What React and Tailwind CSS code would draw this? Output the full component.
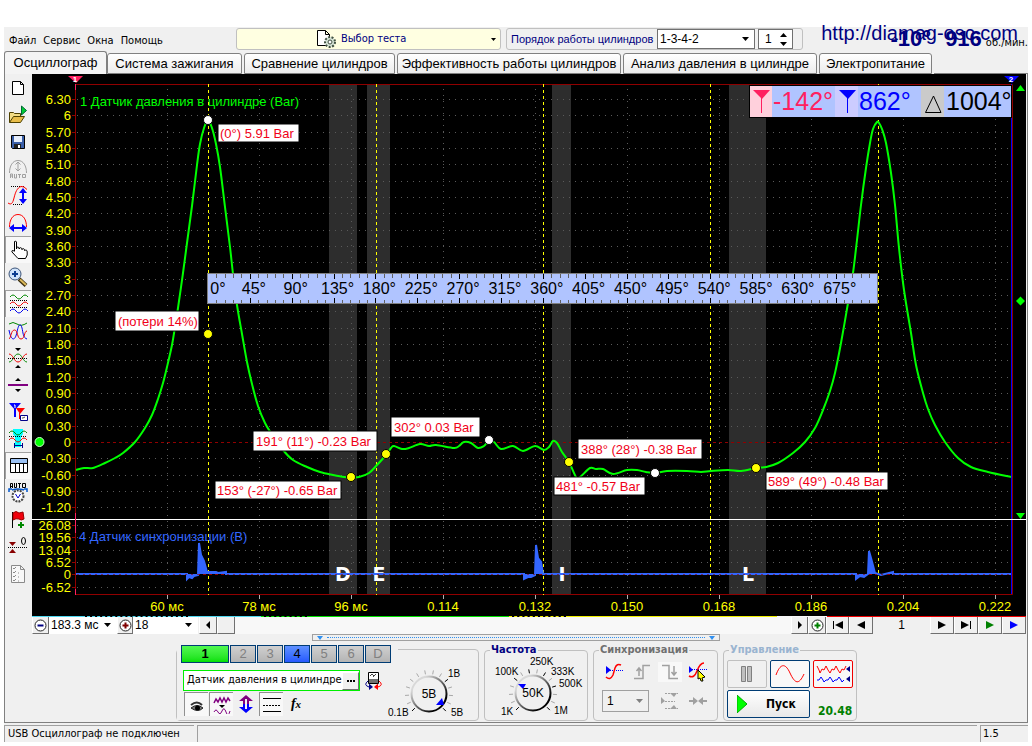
import React from "react";

const UI = "font-['DejaVu_Sans_Condensed','DejaVu_Sans',sans-serif]";
const ARIAL = "font-['Liberation_Sans',Arial,sans-serif]";

const range = (n) => Array.from({ length: n }, (_, i) => i);

/* ---------- toolbar icons, all drawn on a 20x20 grid ---------- */

const wave = (y, a = 2) =>
  `M1 ${y} q3 ${-a * 2} 6 0 t6 0 t6 0`;

const tools = [
  {
    name: "Новый",
    icon: <path d="M4.500 3.500h8l3 3v10h-11zM12.500 3.500v3h3" fill="#fff" stroke="#000" />,
  },
  {
    name: "Открыть",
    icon: (
      <>
        <path d="M1.500 17.500v-10h4l1 1h6v3" fill="#f3dc85" stroke="#4d4000" />
        <path d="M1.500 17.500l4-6h11l-4 6z" fill="#e8bd4a" stroke="#4d4000" />
        <path d="M13.500 1v9l5-4.500z" fill="#0c3" stroke="#063" />
      </>
    ),
  },
  {
    name: "Сохранить",
    icon: (
      <>
        <path d="M3.500 3.500h13v13h-12l-1-1z" fill="#3a5fa8" stroke="#000" />
        <path d="M6 4h8v6H6z" fill="#e6eefc" />
        <path d="M6 12h7v4H6z" fill="#222" />
        <path d="M10 13h2v3h-2z" fill="#fff" />
      </>
    ),
  },
  {
    name: "Авто",
    icon: (
      <g fill="none" stroke="#a0a0a0">
        <path d="M1.500 14c0-7 3-12.500 8.500-12.500S18.500 7 18.500 14" />
        <path d="M10 3v9M7.500 5.500L10 3l2.500 2.500M7.500 9.500L10 12l2.500-2.500" />
        <path d="M2.500 19v-4h2v4M2.500 17h2M6.500 15v4h2v-4M10 15.500h3M11.500 15v4M14.500 15.500h3v3h-3z" />
      </g>
    ),
  },
  {
    name: "Амплитуда",
    icon: (
      <>
        <path d="M3 .5h14M5 18.500h10" stroke="#000" strokeDasharray="1 1" />
        <path d="M0 17c3 2 4.500 1 6-5s3-10 7-11.500q3-.5 6 3" fill="none" stroke="#f00" />
        <path d="M15 4v12" stroke="#00f" strokeWidth="2" />
        <path d="M11 7l4-5 4 5zM11 13l4 5 4-5z" fill="#00f" />
      </>
    ),
  },
  {
    name: "Развертка",
    icon: (
      <>
        <path d="M1.500 14c0-7 3-12.500 8.500-12.500S18.500 7 18.500 14" fill="none" stroke="#f00" />
        <path d="M4 15h12" stroke="#00f" strokeWidth="2" />
        <path d="M6 11l-5 4 5 4zM14 11l5 4-5 4z" fill="#00f" />
      </>
    ),
  },
  {
    name: "Рука",
    pressed: true,
    icon: (
      <path
        d="M5.500 1.500q1.500-1 2 .5v7q0-2 1.300-2t1.400 2q.2-1.500 1.500-1.300t1.300 2q.3-1.300 1.500-1t1.200 2q.4-1 1.500-.6t1 1.900v3l-1.700 3.500H9l-6-6.500q-.8-2.500 2.500-.8z"
        fill="#fff"
        stroke="#000"
      />
    ),
  },
  {
    name: "Лупа",
    icon: (
      <>
        <path d="M11 12l7 6.500" stroke="#3b2f10" strokeWidth="4" />
        <path d="M12 12.500l6 5.500" stroke="#dcb95a" strokeWidth="2" />
        <circle cx="7" cy="7" r="6" fill="#cfe3fb" stroke="#3c5478" />
        <path d="M4 7h6M7 4v6" stroke="#0b3d91" strokeWidth="2" />
      </>
    ),
  },
  {
    name: "Раздельные каналы",
    pressed: true,
    icon: (
      <g fill="none">
        <path d={wave(3)} stroke="#080" />
        <path d="M1 6.500h18M1 13.500h18" stroke="#000" strokeDasharray="1 1" />
        <path d={wave(10)} stroke="#e00" />
        <path d={wave(17)} stroke="#00e" />
      </g>
    ),
  },
  {
    name: "Совмещенные каналы",
    icon: (
      <g fill="none">
        <path d="M1 3q4-3 8 0t10-1" stroke="#080" />
        <path d="M1 9C3 20 7 21 9 11s4-8 5-4 1 10 5 11" stroke="#00e" />
        <path d="M1 18C3 17 3 9 6.500 9S9 18 13 18s3-8 6-8" stroke="#e00" />
      </g>
    ),
  },
  {
    name: "Сжать каналы",
    icon: (
      <>
        <path d="M1 14C5 14 6 6 10 6s5 8 9 8" fill="none" stroke="#080" />
        <path d="M1 6C5 6 6 14 10 14s5-8 9-8" fill="none" stroke="#e00" />
        <path d="M0 10.500h20" stroke="#000" strokeDasharray="1 1" />
        <path d="M7 0h6l-3 3zM7 20h6l-3-3z" />
      </>
    ),
  },
  {
    name: "Линия",
    icon: (
      <>
        <path d="M0 10h20" stroke="#800080" strokeWidth="2" />
        <path d="M7 6h6l-3-3zM7 14h6l-3 3z" />
      </>
    ),
  },
  {
    name: "Маркеры",
    icon: (
      <>
        <path d="M1 1h12L7 8z" fill="#00f" />
        <path d="M7 7v8" stroke="#00f" strokeWidth="2" />
        <path d="M8 6h9l-5 6z" fill="#f00" />
        <path d="M11.500 11v6" stroke="#f00" />
        <path d="M12.500 13.500h7v5h-7z" fill="#fff" stroke="#008" />
        <path d="M6 3h1v3" fill="none" stroke="#fff" />
        <path d="M14 16h1l2-1" fill="none" stroke="#555" />
      </>
    ),
  },
  {
    name: "Область",
    icon: (
      <>
        <path d="M5 0h10v5l-2 3v10H7V8L5 5z" fill="#0ff" />
        <path d={wave(4)} fill="none" stroke="#080" />
        <path d={wave(11)} fill="none" stroke="#e00" />
        <path d="M1 7.500h18" stroke="#000" strokeDasharray="1 1" />
        <path d="M6.500 14v5M14.500 14v5M7 16.500h7" stroke="#008" />
      </>
    ),
  },
  {
    name: "Таблица",
    pressed: true,
    icon: (
      <>
        <path d="M1.500 2.500h17v14h-17z" fill="#fff" stroke="#000" />
        <path d="M2 3h16v4H2z" fill="#9bc2f5" />
        <path d="M1 7.500h18M6.500 7v10M10.500 7v10M14.500 7v10" stroke="#000" />
      </>
    ),
  },
  {
    name: "Авто вольтметр",
    icon: (
      <>
        <path d="M2.500 5V.5h2V5M2.500 3.500h2M6.500 0v4.500h2V0M10 .5h3M11.500 0v5M14.500 .5h3v4h-3z" fill="none" stroke="#000" />
        <path d="M1 9V6h3M19 9V6h-3M4 7q6-2 12 0" fill="none" stroke="#05c" strokeWidth="1.500" />
        <circle cx="10" cy="13" r="5.500" fill="#fff" stroke="#444" strokeWidth="2" strokeDasharray="2 1" />
        <path d="M7.500 11l2.500 4 2.500-4" fill="none" stroke="#00c" />
      </>
    ),
  },
  {
    name: "Флаг",
    icon: (
      <>
        <path d="M4.500 2v16" stroke="#000" />
        <path d="M5 3q3-3 6 0l4-1 1 7q-3 2-5 0-3-1-6 1z" fill="#f0000c" stroke="#900" />
        <path d="M10 15h6M13 12v6" stroke="#080" strokeWidth="2" />
      </>
    ),
  },
  {
    name: "Ноль",
    icon: (
      <>
        <path d="M1 5h7l-3.500 4zM1 16h7l-3.500-4z" fill="#800" />
        <path d="M0 10.500h20" stroke="#000" strokeDasharray="1 1" />
        <ellipse cx="15.500" cy="4" rx="2" ry="3.500" fill="none" stroke="#000" />
      </>
    ),
  },
  {
    name: "Список",
    icon: (
      <g fill="none" stroke="#8a8a8a">
        <path d="M3.500 1.500h9l4 4v13h-13zM12.500 1.500v4h4" fill="#f8f8f8" />
        <path d="M5 4l1 1 2-2M5 8l1 1 2-2M5 12l1 1 2-2M5 16l1 1 2-2M10 9h1M10 13h1M10 17h1" />
      </g>
    ),
  },
];

function Toolbar() {
  return (
    <div className="flex w-7 shrink-0 flex-col border-l border-[#808080]">
      {tools.map((t) => (
        <button
          key={t.name}
          title={t.name}
          aria-label={t.name}
          className={`flex h-[27px] w-[26px] items-center justify-center ${
            t.pressed ? "border-l border-t border-[#a0a0a0] bg-[#f8f8f8]" : ""
          }`}
        >
          <svg viewBox="0 0 20 20" className="h-5 w-5">
            {t.icon}
          </svg>
        </button>
      ))}
    </div>
  );
}

/* ---------- chart ---------- */

const pressure = [
  [76, 470], [84, 468], [93, 468], [105, 463], [115, 458], [123, 453], [135, 442], [145, 428],
  [152, 415], [158, 399], [163, 383], [167, 367], [172, 345], [175, 327], [178, 308], [183, 273],
  [187, 243], [192, 206], [197, 165], [200, 144], [204, 128], [208, 120], [212, 128], [216, 144],
  [220, 167], [225, 207], [230, 247], [233, 274], [237, 305], [242, 334], [247, 362], [252, 384],
  [258, 406], [265, 423], [271, 433], [283, 450], [293, 460], [307, 467], [320, 472], [333, 475],
  [344, 477], [351, 477], [359, 477], [369, 473], [377, 465], [386, 455], [391, 448], [394, 446],
  [402, 449], [409, 448], [420, 444], [429, 446], [436, 445], [454, 448], [459, 446], [464, 442],
  [471, 443], [478, 448], [484, 446], [489, 441], [494, 442], [501, 449], [513, 446], [523, 451],
  [535, 446], [544, 450], [549, 447], [553, 441], [557, 443], [562, 452], [569, 462], [576, 477],
  [580, 477], [590, 468], [596, 469], [603, 469], [613, 474], [627, 470], [637, 470], [646, 472],
  [655, 473], [667, 471], [687, 471], [701, 472], [711, 471], [728, 470], [741, 471], [756, 468],
  [766, 467], [778, 463], [793, 453], [805, 442], [815, 428], [823, 410], [830, 391], [835, 373],
  [841, 343], [848, 303], [853, 273], [857, 240], [861, 205], [866, 168], [870, 143], [873, 129],
  [877, 122], [879, 123], [882, 129], [886, 143], [891, 173], [895, 205], [899, 248], [904, 290],
  [911, 333], [916, 365], [923, 393], [928, 409], [935, 425], [945, 442], [958, 458], [971, 467],
  [988, 472], [1011, 477],
];

// Catmull-Rom through the samples
const smooth = (pts) =>
  pts.slice(1).reduce((d, [x, y], i) => {
    const p0 = pts[i - 1] || pts[i];
    const p1 = pts[i];
    const p3 = pts[i + 2] || [x, y];
    return (
      d +
      `C${p1[0] + (x - p0[0]) / 6} ${p1[1] + (y - p0[1]) / 6} ${x - (p3[0] - p1[0]) / 6} ${y - (p3[1] - p1[1]) / 6} ${x} ${y}`
    );
  }, `M${pts[0]}`);

const sync =
  "M76 574H187V579L189 577L192 578L194 576L198 575L199 543L201 555L204 561L207 572H216L218 573L226 572V574H524V579L528 577L531 577L535 575L536 545L538 558L541 562L543 574H856V579L860 576L864 577L868 574L869 551L871 558L875 573L881 575L893 572V574H1011";

const bands = [[329, 28], [367, 23], [552, 19], [729, 37]];
const timeTicks = ["60 мс", "78 мс", "96 мс", "0.114", "0.132", "0.150", "0.168", "0.186", "0.204", "0.222"];
const syncTicks = [["26.08", 525], ["19.56", 537], ["13.04", 550], ["6.52", 562], ["0", 574], ["-6.52", 587]];

const barLabel = (i) => {
  const v = (63 - 3 * i) / 10;
  return Number.isInteger(v) ? String(v) : v.toFixed(2);
};
const barY = (i) => Math.round(99 + 16.33 * i);

const dots = [
  [208, 120, "#fff"], [208, 334, "#ff0"], [351, 477, "#ff0"], [386, 454, "#ff0"], [489, 440, "#fff"],
  [569, 462, "#ff0"], [655, 473, "#fff"], [756, 468, "#ff0"],
];

const notes = [
  { x: 218, y: 124, w: 81, h: 18, text: "(0°) 5.91 Bar" },
  { x: 115, y: 311, w: 84, h: 20, text: "(потери 14%)" },
  { x: 391, y: 417, w: 89, h: 20, text: "302° 0.03 Bar" },
  { x: 253, y: 431, w: 124, h: 20, text: "191° (11°) -0.23 Bar" },
  { x: 578, y: 439, w: 124, h: 20, text: "388° (28°) -0.38 Bar" },
  { x: 554, y: 477, w: 91, h: 18, text: "481° -0.57 Bar" },
  { x: 215, y: 481, w: 126, h: 18, text: "153° (-27°) -0.65 Bar" },
  { x: 766, y: 472, w: 122, h: 18, text: "589° (49°) -0.48 Bar" },
];

function Ruler() {
  return (
    <g>
      <rect x="207.500" y="273.500" width="670" height="30" fill="#b0c4ff" stroke="#808080" />
      {range(79).map((i) => {
        const x = Math.round(208 + (i + 1) * 8.37) + 0.5;
        const major = (i + 1) % 5 === 0;
        return (
          <path
            key={i}
            d={major ? `M${x} 274v5M${x} 303v-5` : `M${x} 274v4M${x} 303v-3`}
            stroke={major ? "#000" : "#606060"}
          />
        );
      })}
      <g fontSize="16" fill="#000">
        {range(16).map((i) => (
          <text key={i} x={i ? 212 + i * 41.85 : 218} y="294" textAnchor="middle">
            {i * 45}°
          </text>
        ))}
      </g>
    </g>
  );
}

function CursorReadout() {
  return (
    <g fontSize="25">
      <rect x="749" y="85" width="263" height="33" fill="#000" />
      <rect x="750" y="86" width="261" height="31" fill="#b0c4ff" />
      <rect x="750" y="86" width="22" height="31" fill="#ffd0dc" />
      <rect x="835" y="86" width="23" height="31" fill="#ccccff" />
      <rect x="921" y="86" width="23" height="31" fill="#cacaca" />
      <path d="M753 90h17l-8 9z" fill="#ff2060" />
      <path d="M761.500 98v15" stroke="#ff2060" />
      <path d="M839 90h17l-8 9z" fill="#00f" />
      <path d="M847.500 98v15" stroke="#00f" />
      <path d="M933.500 96l-8 16.500h15.500z" fill="none" stroke="#000" />
      <text x="773" y="110" fill="#ff2060">-142°</text>
      <text x="859" y="110" fill="#00f">862°</text>
      <text x="946" y="110" fill="#000">1004°</text>
    </g>
  );
}

function Chart() {
  return (
    <svg viewBox="32 74 994 542" className={`block h-auto w-full ${ARIAL}`} fontSize="13">
      <rect x="32" y="74" width="994" height="542" fill="#000" />
      {bands.map(([x, w]) => (
        <rect key={x} x={x} y="85" width={w} height="509" fill="#2d2d2d" />
      ))}

      <g stroke="#5a5a5a" strokeDasharray="1 5">
        {range(26).filter((i) => i !== 21).map((i) => (
          <path key={i} d={`M77 ${barY(i) + 0.5}H1011`} />
        ))}
        {syncTicks.filter(([v]) => v !== "0").map(([v, y]) => (
          <path key={v} d={`M77 ${y + 0.5}H1011`} />
        ))}
        {timeTicks.map((t, i) => (
          <path key={t} d={`M${167.5 + i * 92} 89V592`} />
        ))}
      </g>
      <path d="M77 442.500H1011M77 574.500H1011" stroke="#900000" strokeDasharray="3 3" />

      {/* frame */}
      <path d="M75.500 84.500H1012.500V594.500H75.500z" fill="none" stroke="#900000" />
      <path d="M1011.500 84V594" stroke="#00f" />
      <path d="M32 519.500H1026" stroke="#fff" />
      <path d="M75.500 84v6M75.500 513v20M75.500 589v6" stroke="#ff2060" />
      <path
        d={range(26).map((i) => `M72 ${barY(i) + 0.5}h3`).join("") + syncTicks.map(([, y]) => `M72 ${y + 0.5}h3`).join("")}
        stroke="#900000"
      />
      <path d={timeTicks.map((_, i) => `M${167.5 + i * 92} 595v4`).join("")} stroke="#b0b0b0" />

      <g fill="#ff0" textAnchor="end">
        {range(26).map((i) => (
          <text key={i} x="71" y={barY(i) + 5}>{barLabel(i)}</text>
        ))}
        {syncTicks.map(([v, y]) => (
          <text key={v} x="71" y={y + 5}>{v}</text>
        ))}
      </g>
      <g fill="#ff0" textAnchor="middle">
        {timeTicks.map((t, i) => (
          <text key={t} x={167 + i * 92} y="611">{t}</text>
        ))}
      </g>

      <text x="80" y="106" fill="#0f0">1 Датчик давления в цилиндре (Bar)</text>
      <text x="79" y="541" fill="#36f">4 Датчик синхронизации (В)</text>

      <path
        d="M208.500 84V595M376.500 84V595M543.500 84V595M710.500 84V595M878.500 84V595"
        stroke="#ff0"
        strokeDasharray="3 3"
      />
      <path d={smooth(pressure)} fill="none" stroke="#0f0" strokeWidth="2" />
      <g fontSize="19" fontWeight="bold" fill="#fff" textAnchor="middle" className="font-['DejaVu_Sans',sans-serif]">
        <text x="343" y="581">D</text>
        <text x="379" y="581">E</text>
        <text x="562" y="581">I</text>
        <text x="748" y="581">L</text>
      </g>
      <path d={sync} fill="#36f" stroke="#36f" strokeWidth="2" />
      <path d="M77 574.500H1011" stroke="#900000" strokeDasharray="2 4" opacity="0.600" />

      <Ruler />
      {notes.map((n) => (
        <g key={n.text}>
          <rect x={n.x} y={n.y} width={n.w} height={n.h} fill="#fff" stroke="#000" />
          <text x={n.x + (n.h > 18 ? 3 : 2)} y={n.y + n.h / 2 + 5} fill="#f00018">
            {n.text}
          </text>
        </g>
      ))}
      {dots.map(([x, y, c]) => (
        <circle key={`${x}-${y}`} cx={x} cy={y} r="4.500" fill={c} stroke="#000" />
      ))}
      <CursorReadout />

      {/* edge markers */}
      <path d="M68 76h15l-7 7z" fill="#ff2060" />
      <path d="M1004 76h15l-7 7z" fill="#00f" />
      <g fill="#fff" fontSize="8" fontWeight="bold" textAnchor="middle">
        <text x="75" y="82">1</text>
        <text x="1011" y="82">2</text>
      </g>
      <circle cx="39.500" cy="442" r="4.500" fill="#0f0" stroke="#cfc" />
      <path d="M1016 91h9l-4.500-6zM1016 301l4.500-4.500 4.500 4.500-4.500 4.500zM1016 513h9l-4.500 6z" fill="#0f0" />
    </svg>
  );
}

/* ---------- header ---------- */

function Header() {
  return (
    <header className={`relative flex h-6 items-start pt-px text-[11px] ${UI}`}>
      <nav className="flex w-[232px] shrink-0 gap-[7px] pl-[5px] pt-[5px]">
        <button>Файл</button>
        <button>Сервис</button>
        <button>Окна</button>
        <button>Помощь</button>
      </nav>
      <button className="flex h-[22px] w-[265px] shrink-0 items-center rounded-[3px] border border-[#c0c0c0] bg-[#ffffe1] pl-[79px] pr-1 text-[#000080]">
        <svg viewBox="0 0 21 20" className="mr-1 h-5 w-[21px]">
          <path d="M1.500 1.500h8l4 4v11h-12zM9.500 1.500v4h4" fill="#fff" stroke="#000" />
          <circle cx="14" cy="13" r="5" fill="#d5e3d5" stroke="#405040" strokeWidth="2" strokeDasharray="2 1.500" />
          <circle cx="14" cy="13" r="2" fill="#fff" stroke="#405040" />
        </svg>
        Выбор теста
        <svg viewBox="0 0 5 3" className="ml-auto h-[3px] w-[5px]">
          <path d="M0 0h5L2.500 3z" />
        </svg>
      </button>
      <div className="ml-[5px] flex h-[22px] w-[297px] shrink-0 items-center rounded-[3px] border border-[#c0c0c0] pl-1">
        <label htmlFor="order" className={`w-[146px] whitespace-nowrap text-[#000080] ${ARIAL}`}>
          Порядок работы цилиндров
        </label>
        <div className="relative">
          <select
            id="order"
            className={`h-5 w-[98px] appearance-none border border-[#707070] bg-white pl-[2px] text-xs ${ARIAL}`}
          >
            <option>1-3-4-2</option>
          </select>
          <svg viewBox="0 0 7 4" className="pointer-events-none absolute right-1.5 top-2 h-1 w-[7px]">
            <path d="M0 0h7L3.500 4z" />
          </svg>
        </div>
        <div className="relative ml-[3px]">
          <input
            aria-label="Цилиндр"
            defaultValue="1"
            className={`h-5 w-[35px] border border-[#707070] bg-white pl-1.5 text-xs ${ARIAL}`}
          />
          <svg viewBox="0 0 7 13" className="pointer-events-none absolute right-1.5 top-1 h-[13px] w-[7px]">
            <path d="M0 4h7L3.500 0zM0 9h7l-3.500 4z" />
          </svg>
        </div>
      </div>
      <div className="ml-auto flex items-baseline text-[#000080]">
        <span className={`mr-3.5 text-[22px] font-bold leading-[22px] ${ARIAL}`}>-10°</span>
        <span className={`mr-1 text-[22px] font-bold leading-[22px] ${ARIAL}`}>916</span>
        <span className="text-[11px] text-black">об./мин.</span>
      </div>
      <a
        href="#site"
        className={`absolute -top-1.5 right-2.5 whitespace-nowrap text-xl leading-6 text-[#000080] ${ARIAL}`}
      >
        http://diamag-osc.com
      </a>
    </header>
  );
}

const tabs = [
  ["Система зажигания", "w-[135px]"],
  ["Сравнение цилиндров", "w-[151px]"],
  ["Эффективность работы цилиндров", "w-[224px]"],
  ["Анализ давления в цилиндре", "w-[194px]"],
  ["Электропитание", "w-[113px]"],
];

function Tabs() {
  return (
    <div role="tablist" className={`flex h-[23px] items-end text-[13px] leading-5 ${ARIAL}`}>
      <button
        role="tab"
        aria-selected="true"
        className="h-[23px] w-[103px] shrink-0 rounded-t-[3px] border border-b-0 border-[#808080] bg-[#f4f4f4]"
      >
        Осциллограф
      </button>
      {tabs.map(([t, w]) => (
        <button
          key={t}
          role="tab"
          className={`mr-0.5 flex h-[21px] shrink-0 justify-center whitespace-nowrap rounded-t-[3px] border border-[#808080] bg-linear-to-b from-white to-[#ececec] ${w}`}
        >
          {t}
        </button>
      ))}
      <div className="flex-1 self-end border-b border-[#808080]" />
    </div>
  );
}

/* ---------- navigation row ---------- */

const flat = "flex h-[18px] shrink-0 items-center justify-center border border-t-white border-l-white border-r-[#707070] border-b-[#707070] bg-[#f0f0f0]";

function Glyph({ d, color = "#000" }) {
  return (
    <svg viewBox="0 0 12 8" className="h-2 w-3">
      <path d={d} fill={color} />
    </svg>
  );
}

function CircleSign({ color, plus }) {
  return (
    <svg viewBox="0 0 13 13" className="h-[13px] w-[13px]">
      <circle cx="6.500" cy="6.500" r="5.500" fill="#fff" stroke="#222" />
      <path d={plus ? "M3.500 6.500h6M6.500 3.500v6" : "M3.500 6.500h6"} stroke={color} strokeWidth="2" />
    </svg>
  );
}

function NavSelect({ label, value, width }) {
  return (
    <div className="relative shrink-0">
      <select aria-label={label} className={`block h-[18px] appearance-none bg-white pl-[2px] text-xs ${width}`}>
        <option>{value}</option>
      </select>
      <svg viewBox="0 0 7 4" className="pointer-events-none absolute right-1.5 top-[7px] h-1 w-[7px]">
        <path d="M0 0h7L3.500 4z" />
      </svg>
    </div>
  );
}

function NavRow() {
  return (
    <div className={`relative flex h-[18px] ${ARIAL}`}>
      <button aria-label="Уменьшить" className={`${flat} w-[17px]`}><CircleSign color="#000080" /></button>
      <NavSelect label="Длительность" value="183.3 мс" width="w-[68px]" />
      <button aria-label="Увеличить" className={`${flat} w-4`}><CircleSign color="#800000" plus /></button>
      <NavSelect label="Цена деления" value="18" width="w-[65px]" />
      <button aria-label="Влево" className={`${flat} ml-px w-[18px]`}><Glyph d="M8 0v8L4 4z" /></button>
      <button aria-label="Положение" className={`${flat} w-[18px]`} />
      <div className="flex-1 bg-[#f8f8f8]" />
      <button aria-label="Вправо" className={`${flat} w-[17px]`}><Glyph d="M4 0v8l4-4z" /></button>
      <button aria-label="Добавить" className={`${flat} w-[18px]`}><CircleSign color="#008000" plus /></button>
      <button aria-label="В начало" className={`${flat} w-[23px]`}><Glyph d="M1 0h1v8H1zM11 0v8L3 4z" /></button>
      <button aria-label="Назад" className={`${flat} w-6`}><Glyph d="M10 0v8L2 4z" /></button>
      <span className="w-[57px] text-center text-xs leading-[18px]">1</span>
      <button aria-label="Вперед" className={`${flat} w-6`}><Glyph d="M2 0v8l8-4z" /></button>
      <button aria-label="В конец" className={`${flat} w-6`}><Glyph d="M1 0v8l8-4zM10 0h1v8h-1z" /></button>
      <button aria-label="Воспроизвести" className={`${flat} w-6`}><Glyph d="M2 0v8l8-4z" color="#008000" /></button>
      <button aria-label="Быстро" className={`${flat} w-6`}><Glyph d="M2 0v8l8-4z" color="#0000ff" /></button>

      {/* overview strip */}
      <div className="absolute inset-x-0 top-0 flex h-px bg-black">
        <div className="w-[5%] bg-[#4fd8f0]" />
        <div className="w-[11%] border-t border-dashed border-[#4fd8f0]" />
        <div className="w-[7%] bg-[#4fd8f0]" />
        <div className="w-[5%] border-t border-dashed border-[#00e000]" />
        <div className="w-[20%] bg-[#00e000]" />
        <div className="w-[6%] border-t border-dashed border-[#f0f000]" />
        <div className="w-[21%] bg-[#f0f000]" />
        <div className="w-[5%] bg-[#f8f8f8]" />
        <div className="flex-1 bg-[#f00000]" />
      </div>
    </div>
  );
}

/* ---------- bottom controls ---------- */

function Knob({ cx, value, label, view, width, ticks, pointer, marks }) {
  return (
    <label className={`relative block ${width}`}>
      <svg viewBox={view} className={`block h-auto w-full ${ARIAL}`} fontSize="10">
        <defs>
          <linearGradient id={`rim${cx}`} x1="0" y1="0" x2="1" y2="1">
            <stop offset="0.200" stopColor="#d8d8d8" />
            <stop offset="0.800" stopColor="#000" />
          </linearGradient>
        </defs>
        {range(14).map((i) => {
          const a = ((135 + i * 20.8) * Math.PI) / 180;
          const dark = marks.includes(i);
          return (
            <line
              key={i}
              x1={cx + Math.cos(a) * 20}
              y1={694 + Math.sin(a) * 20}
              x2={cx + Math.cos(a) * 24}
              y2={694 + Math.sin(a) * 24}
              stroke={dark ? "#000" : "#a8a8a8"}
            />
          );
        })}
        <circle cx={cx} cy="694" r="17.500" fill="#f0f0f0" stroke={`url(#rim${cx})`} strokeWidth="2" />
        <path d={pointer} fill="#00f" />
        <text x={cx} y="698" textAnchor="middle" fontSize="12">{value}</text>
        {ticks.map(([t, x, y]) => (
          <text key={t} x={x} y={y}>{t}</text>
        ))}
      </svg>
      <input type="range" aria-label={label} className="absolute inset-0 h-full w-full opacity-0" />
    </label>
  );
}

const channels = ["2", "3", "4", "5", "6", "D"];
const sunk = "flex h-6 w-6 items-center justify-center border-l border-t border-[#909090] bg-[#f8f8f8]";

function ChannelPanel() {
  return (
    <section className="mt-2 flex h-[72px] w-[303px] shrink-0 rounded border border-[#c0c0c0]">
      <div className="-mt-[5px] w-[221px] shrink-0 bg-[#f0f0f0] pl-1">
        <div className={`flex h-[18px] gap-px text-[13px] ${ARIAL}`}>
          <button className="w-12 border border-[#003c74] bg-linear-to-b from-[#50f850] to-[#00e000] font-bold leading-4">
            1
          </button>
          {channels.map((c) => (
            <button
              key={c}
              className={`w-[26px] border border-[#003c74] leading-4 ${
                c === "4" ? "bg-linear-to-b from-[#6090ff] to-[#2858ff]" : "bg-linear-to-b from-[#d0d0d0] to-[#b4b4b4] text-[#808080]"
              }`}
            >
              {c}
            </button>
          ))}
        </div>
        <div className="mt-[7px] flex items-center pl-0.5">
          <div className="flex h-[21px] w-[177px] items-center border border-[#00f000] bg-white pl-[3px]">
            <span className="flex-1 whitespace-nowrap">Датчик давления в цилиндре</span>
            <button aria-label="Выбрать датчик" className={`${flat} w-[17px] font-bold`}>
              <Glyph d="M2 3h2v2H2zM5 3h2v2H5zM8 3h2v2H8z" />
            </button>
          </div>
          <button aria-label="Поменять местами" className="ml-1">
            <svg viewBox="0 0 19 19" className="h-[19px] w-[19px]">
              <path d="M4.500 1.500h10v11h-10z" fill="#fff" stroke="#000" />
              <path d="M5 8h9v4H5z" fill="#707070" />
              <path d="M6 5l2-2 2 2 2-2M9 6l3-3" fill="none" stroke="#444" />
              <path d="M4 10q-5 4 1 6" fill="none" stroke="#008" />
              <path d="M5 12.500l4 3.500-4 3z" fill="#008" />
              <path d="M15 10q5 4-1 6" fill="none" stroke="#f00" />
              <path d="M14 12.500L10 16l4 3z" fill="#f00" />
            </svg>
          </button>
        </div>
        <div className="mt-px flex gap-px pl-[3px]">
          <button aria-label="Показать" className={sunk}>
            <svg viewBox="0 0 16 12" className="mt-1 h-3 w-4">
              <path d="M2 4q6-5 11 0" fill="none" stroke="#333" strokeWidth="2" />
              <path d="M2 7q6-5 12 0-5 5-12 0z" fill="#777" stroke="#222" />
              <circle cx="8.500" cy="7" r="2.500" />
            </svg>
          </button>
          <button aria-label="Фильтр" className={sunk}>
            <svg viewBox="0 0 18 18" className="h-[18px] w-[18px]">
              <path d="M1 7l2-4 2 3 2-4 2 4 2-4 2 4 2-4 2 3" fill="none" stroke="#800080" strokeWidth="1.500" />
              <path d="M6 9h6l-3 3z" />
              <path d="M1 16q2-4 4 0t4-1 4 1 4-1" fill="none" stroke="#800080" />
            </svg>
          </button>
          <button aria-label="Инвертировать" className="flex h-6 w-6 items-center justify-center">
            <svg viewBox="0 0 14 18" className="h-[18px] w-3.5">
              <path d="M7 0l7 6h-4v3H4V6H0z" fill="#800080" />
              <path d="M7 18l7-6h-4V9H4v3H0z" fill="#00f" />
              <path d="M7 4v10" stroke="#f0f0f0" strokeWidth="2" />
            </svg>
          </button>
          <button aria-label="Линии" className={sunk}>
            <svg viewBox="0 0 18 14" className="h-3.5 w-[18px]">
              <path d="M0 .5h18M0 13.500h18" stroke="#000" />
              <path d="M0 7.500h18" stroke="#000" strokeDasharray="2 1" />
            </svg>
          </button>
          <button aria-label="Функция" className="flex h-6 w-6 items-center justify-center">
            <span className="font-['Liberation_Serif',serif] text-sm font-bold italic leading-5">
              f<span className="text-[11px]">x</span>
            </span>
          </button>
        </div>
      </div>
      <div className="-ml-[11px] pt-[9px]">
        <Knob
          cx={429}
          value="5В"
          label="Вольт на деление"
          view="387 659 86 60"
          width="w-[86px]"
          pointer="M436 705l6-7 2 7z"
          marks={[0, 9, 13]}
          ticks={[["1В", 448, 677], ["5В", 451, 716], ["0.1В", 388, 716]]}
        />
      </div>
    </section>
  );
}

function Group({ title, color, width, children }) {
  return (
    <fieldset className={`ml-[5px] mt-[3px] h-[77px] shrink-0 rounded border border-[#c0c0c0] ${width}`}>
      <legend className={`ml-[5px] h-3 px-px font-['DejaVu_Sans_Condensed','DejaVu_Sans',sans-serif] text-[11px] font-bold leading-3 ${color}`}>
        {title}
      </legend>
      {children}
    </fieldset>
  );
}

function SyncPanel() {
  return (
    <Group title="Синхронизация" color="text-[#707070]" width="w-[125px]">
      <div className="flex gap-1 pl-2 pt-1.5">
        <button aria-label="Синхронизация" className="flex h-5 w-6 items-center justify-center">
          <svg viewBox="0 0 18 18" className="h-[18px] w-[18px]">
            <path d="M1 3l5 4-5 4z" fill="#00f" />
            <path d="M5 7.500h13" stroke="#00f" strokeDasharray="1 1" />
            <path d="M1 14q4 4 7-2l2-7q2-5 6-3" fill="none" stroke="#f00" strokeWidth="1.500" />
          </svg>
        </button>
        <button aria-label="По фронту" className="flex h-5 w-6 items-center justify-center">
          <svg viewBox="0 0 18 16" className="h-4 w-[18px]" fill="none" stroke="#a0a0a0" strokeWidth="1.500">
            <path d="M1 14.500h9v-13h7M6 12V4M3.500 7L6 4l2.500 3" />
          </svg>
        </button>
        <button aria-label="По спаду" className="flex h-5 w-6 items-center justify-center bg-[#f8f8f8]">
          <svg viewBox="0 0 18 16" className="h-4 w-[18px]" fill="none" stroke="#a0a0a0" strokeWidth="1.500">
            <path d="M1 1.500h7v13h9M13 2v9M10.500 8l2.500 3 2.500-3" />
          </svg>
        </button>
        <button aria-label="Уровень" className="flex h-5 w-6 items-center justify-center">
          <svg viewBox="0 0 20 20" className="h-5 w-5">
            <path d="M1 4l4 4-4 3z" fill="#00f" />
            <path d="M4 7.500h15" stroke="#00f" strokeDasharray="1 1" />
            <path d="M1 14q5 3 8-5t7-8" fill="none" stroke="#f00" strokeWidth="1.500" />
            <path d="M10 8l7 7-3 1 1 3h-2l-1-3-2 1z" fill="#ff0" stroke="#000" />
          </svg>
        </button>
      </div>
      <div className="flex items-center gap-2 pl-2 pt-2">
        <div className="relative">
          <select
            aria-label="Канал синхронизации"
            className={`block h-[22px] w-[47px] appearance-none border border-[#a0a0a0] bg-[#f0f0f0] pl-1 text-xs ${ARIAL}`}
          >
            <option>1</option>
          </select>
          <svg viewBox="0 0 7 4" className="pointer-events-none absolute right-1.5 top-[9px] h-1 w-[7px]">
            <path d="M0 0h7L3.500 4z" fill="#808080" />
          </svg>
        </div>
        <button aria-label="По центру" className="flex h-5 w-6 items-center justify-center">
          <svg viewBox="0 0 18 18" className="h-[18px] w-[18px]">
            <path d="M1 5l4 4-4 3zM10 1h7l-3 4zM10 17h7l-3-4z" fill="#a0a0a0" />
            <path d="M5 9.500h10M5 1.500h13M5 16.500h13" stroke="#a0a0a0" strokeDasharray="2 1" />
          </svg>
        </button>
        <button aria-label="Сжать">
          <svg viewBox="0 0 18 10" className="h-2.5 w-[18px]">
            <path d="M4 1l5 4-5 4zM14 1L9 5l5 4z" fill="#a0a0a0" />
            <path d="M0 5h5M13 5h5" stroke="#a0a0a0" strokeWidth="2" />
          </svg>
        </button>
      </div>
    </Group>
  );
}

function ControlPanel() {
  const btn = "flex h-7 w-10 items-center justify-center border rounded-[2px]";
  return (
    <Group title="Управление" color="text-[#9ab4d0]" width="w-[134px]">
      <div className="flex gap-[3px] pl-[3px] pt-1">
        <button aria-label="Пауза" className={`${btn} border-[#c0c0c0] bg-[#f0f0f0]`}>
          <svg viewBox="0 0 12 16" className="h-4 w-3">
            <path d="M.5 .5h4v15h-4zM6.500 .5h4v15h-4z" fill="#c0c0c0" stroke="#808080" />
          </svg>
        </button>
        <button aria-label="Осциллограмма" className={`${btn} border-[#003c74] bg-[#f8f8f8]`}>
          <svg viewBox="0 0 30 20" className="h-5 w-[30px]">
            <path d="M1 11C5 0 10-2 15 9s9 12 14 1" fill="none" stroke="#f00" />
          </svg>
        </button>
        <button aria-label="Самописец" className={`${btn} border-[#f00000] bg-[#f8f8f8]`}>
          <svg viewBox="0 0 34 20" className="h-5 w-[34px]" fill="none">
            <path d="M1 2l2 4 1 3 2-4 2 1 2-4 2 4 2 3 2-4 2 1 2-4 2 4 2 3 2-4 2 1 2-4" stroke="#f00" />
            <path d="M1 16h2l2-3 2 3 1 2 2-2h2l2-3 2 3 1 2 2-2h2l2-3 2 3 1 2 2-2" stroke="#00f" />
            <path d="M34 2v6l-4-3zM34 12v6l-4-3z" fill="#008" />
          </svg>
        </button>
      </div>
      <div className="flex pl-[3px] pt-0.5">
        <button className="flex h-7 w-[83px] items-center rounded-[2px] border border-[#003c74] bg-linear-to-b from-white to-[#e8e8e8] pl-[9px] text-xs font-bold">
          <svg viewBox="0 0 10 18" className="mr-[19px] h-[18px] w-2.5">
            <path d="M0 0l10 9-10 9z" fill="#0f0" stroke="#0a0" />
          </svg>
          Пуск
        </button>
        <span className="mt-[14px] pl-2 text-xs font-bold leading-[14px] text-[#008000]">20.48</span>
      </div>
    </Group>
  );
}

function Controls() {
  return (
    <div className={`flex h-[81px] pl-[171px] text-[11px] ${UI}`}>
      <ChannelPanel />
      <Group title="Частота" color="text-[#000080]" width="w-[104px]">
        <Knob
          cx={533}
          value="50K"
          label="Частота"
          view="485 657 102 62"
          width="w-[102px]"
          pointer="M518 685h8l-3 5z"
          marks={[0, 4, 6, 8, 10, 13]}
          ticks={[
            ["250K", 530, 666], ["100K", 495, 676], ["333K", 551, 676],
            ["500K", 559, 688], ["1M", 554, 715], ["1K", 501, 716],
          ]}
        />
      </Group>
      <SyncPanel />
      <ControlPanel />
    </div>
  );
}

function Splitter() {
  return (
    <div className="flex h-[7px] justify-center">
      <div className="flex h-[7px] w-[408px] items-center border border-[#a0a0a0] px-1">
        <svg viewBox="0 0 6 4" className="h-1 w-1.5"><path d="M0 0h6L3 4z" fill="#3090f0" /></svg>
        <div className="mx-1 flex-1 border-t border-dotted border-[#3090f0]" />
        <svg viewBox="0 0 6 4" className="h-1 w-1.5"><path d="M0 0h6L3 4z" fill="#3090f0" /></svg>
      </div>
    </div>
  );
}

export default function App() {
  return (
    <div className="min-h-screen bg-white px-1 pb-[5px] pt-[27px] text-black">
      <div className="bg-[#f0f0f0]">
        <Header />
        <Tabs />
        <main className="border-b border-r border-[#808080]">
          <div className="flex">
            <Toolbar />
            <div className="mr-px min-w-0 flex-1">
              <Chart />
              <NavRow />
            </div>
          </div>
          <div className="border-l border-[#808080]">
            <Splitter />
            <Controls />
          </div>
        </main>
        <footer className={`flex gap-[3px] pt-0.5 text-[11px] leading-4 ${UI}`}>
          <div className="h-[17px] w-[190px] border-l border-t border-[#a0a0a0] pl-[3px]">USB Осциллограф не подключен</div>
          <div className="h-[17px] flex-1 border-l border-t border-[#a0a0a0]" />
          <div className="h-[17px] w-12 border-l border-t border-[#a0a0a0] pl-0.5">1.5</div>
        </footer>
      </div>
    </div>
  );
}
